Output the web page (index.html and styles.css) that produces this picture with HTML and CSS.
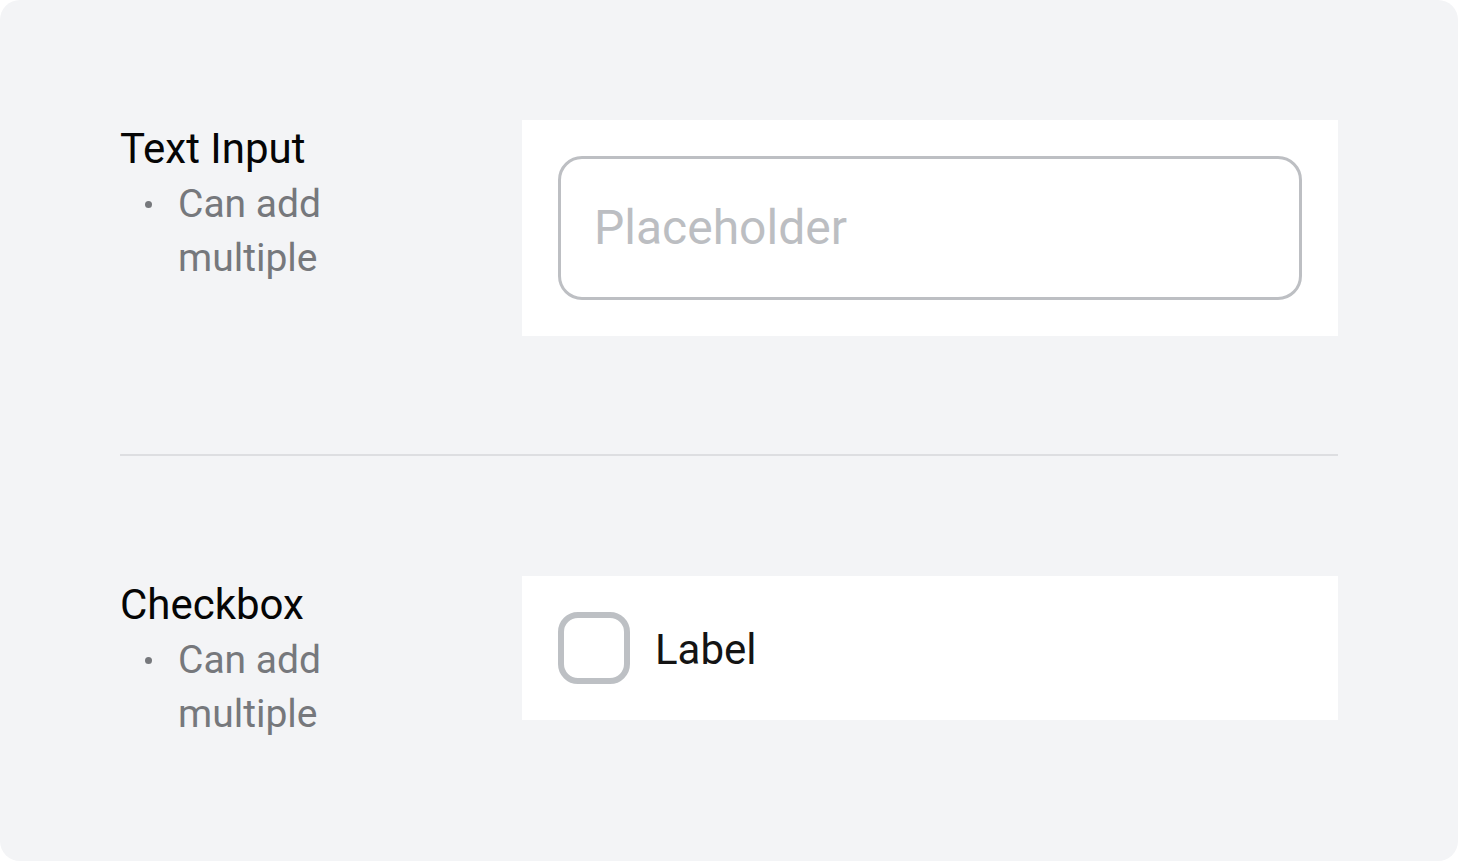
FILE: index.html
```html
<!DOCTYPE html>
<html lang="en">
<head>
<meta charset="utf-8">
<title>Form components</title>
<link rel="stylesheet" href="styles.css">
</head>
<body>
<main class="card">
  <section class="row">
    <div class="info">
      <h2 class="title">Text Input</h2>
      <ul class="notes"><li>Can add multiple</li></ul>
    </div>
    <div class="demo demo-input">
      <input class="text-input" type="text" placeholder="Placeholder">
    </div>
  </section>
  <hr class="divider">
  <section class="row">
    <div class="info">
      <h2 class="title">Checkbox</h2>
      <ul class="notes"><li>Can add multiple</li></ul>
    </div>
    <div class="demo demo-check">
      <span class="checkbox"></span>
      <span class="check-label">Label</span>
    </div>
  </section>
</main>
</body>
</html>
```

FILE: styles.css
```css
html, body {
  margin: 0;
  padding: 0;
  background: #ffffff;
}
body {
  font-family: Roboto, "Noto Sans", Arial, sans-serif;
}
.card {
  box-sizing: border-box;
  width: 1458px;
  height: 861px;
  background: #f3f4f6;
  border-radius: 20px;
  padding: 120px 120px 0 120px;
}
.row {
  display: grid;
  grid-template-columns: 240px 1fr;
  column-gap: 162px;
  align-items: start;
}
.info {
  padding-top: 2px;
}
.title {
  margin: 0;
  font-size: 42px;
  font-weight: 400;
  line-height: 54px;
  color: #050505;
}
.notes {
  margin: 1px 0 0 0;
  padding: 0;
  list-style: none;
}
.notes li {
  display: flex;
  align-items: flex-start;
  font-size: 39px;
  line-height: 54px;
  color: #76787c;
  padding-left: 25px;
}
.notes li::before {
  content: "";
  flex: 0 0 7px;
  width: 7px;
  height: 7px;
  border-radius: 50%;
  background: #76787c;
  margin-top: 24px;
  margin-right: 26px;
}
.demo {
  background: #ffffff;
  padding: 36px;
}
.text-input {
  display: block;
  box-sizing: border-box;
  width: 100%;
  height: 144px;
  border: 3px solid #bdbfc3;
  border-radius: 24px;
  padding: 0 33px 2px 33px;
  font-family: Roboto, "Noto Sans", Arial, sans-serif;
  font-size: 48px;
  color: #1a1a1a;
  background: #fff;
  outline: none;
}
.text-input::placeholder {
  color: #bcbec2;
}
.divider {
  border: 0;
  height: 2px;
  background: #dddee1;
  margin: 118px 0 120px 0;
}
.demo-check {
  display: flex;
  align-items: center;
  gap: 25px;
}
.checkbox {
  box-sizing: border-box;
  width: 72px;
  height: 72px;
  border: 6px solid #bdc0c4;
  border-radius: 20px;
  background: #fff;
}
.check-label {
  font-size: 42px;
  line-height: 54px;
  padding-top: 4px;
  color: #141414;
}
```
